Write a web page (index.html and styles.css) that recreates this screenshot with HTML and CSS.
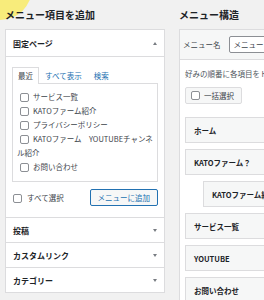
FILE: index.html
```html
<!DOCTYPE html>
<html lang="ja">
<head>
  <meta charset="UTF-8" />
  <title>メニュー</title>
  <link rel="stylesheet" href="styles.css">
</head>
<body>
  <div class="highlight"></div>

  <div class="page">
    <div class="col-left">
      <h2>メニュー項目を追加</h2>

      <div class="accordion">
        <div class="acc-head first">固定ページ <span class="arrow up"></span></div>
        <div class="acc-body">
          <div class="tabs">
            <span class="tab active">最近</span>
            <span class="tab">すべて表示</span>
            <span class="tab">検索</span>
          </div>
          <div class="tab-panel">
            <label class="item"><input type="checkbox">サービス一覧</label>
            <label class="item"><input type="checkbox">KATOファーム紹介</label>
            <label class="item"><input type="checkbox">プライバシーポリシー</label>
            <label class="item"><input type="checkbox">KATOファーム　YOUTUBEチャンネル紹介</label>
            <label class="item"><input type="checkbox">お問い合わせ</label>
          </div>
          <div class="acc-foot">
            <label class="select-all"><input type="checkbox">すべて選択</label>
            <button class="add-btn">メニューに追加</button>
          </div>
        </div>
        <div class="acc-head">投稿 <span class="arrow"></span></div>
        <div class="acc-head">カスタムリンク <span class="arrow"></span></div>
        <div class="acc-head last">カテゴリー <span class="arrow"></span></div>
      </div>
    </div>

    <div class="col-right">
      <h2>メニュー構造</h2>

      <div class="menu-panel">
        <div class="menu-head">
          <label for="menuName">メニュー名</label>
          <input id="menuName" class="menu-name" type="text" value="メニュー">
        </div>
        <div class="menu-body">
          <p class="hint">好みの順番に各項目をドラッグしてください。</p>
          <label class="bulk"><input type="checkbox">一括選択</label>

          <ul class="menu-list">
            <li class="menu-item">ホーム</li>
            <li class="menu-item">KATOファーム？</li>
            <li class="menu-item sub">KATOファーム紹介</li>
            <li class="menu-item">サービス一覧</li>
            <li class="menu-item">YOUTUBE</li>
            <li class="menu-item">お問い合わせ</li>
          </ul>
        </div>
      </div>
    </div>
  </div>
</body>
</html>
```

FILE: styles.css
```css
:root {
  --bg: #f1f1f1;
  --border: #dcdcde;
  --text: #3c434a;
  --title: #1d2327;
  --link: #2271b1;
  --soft: #f6f7f7;
}

html, body {
  overflow: hidden;
}

body {
  margin: 0;
  background: var(--bg);
  font-family: "Noto Sans CJK JP", "Noto Sans", sans-serif;
  font-size: 7.5px;
  color: var(--text);
}

.highlight {
  position: absolute;
  left: -32px;
  top: -44px;
  width: 64px;
  height: 64px;
  border-radius: 50%;
  background: rgba(255, 230, 0, 0.49);
  z-index: -1;
  pointer-events: none;
}

.page {
  display: flex;
  gap: 14px;
  padding: 8px 0 0 5px;
}

.col-left {
  width: 160px;
  flex: none;
}

.col-right {
  width: 200px;
  flex: none;
}

h2 {
  margin: 0 0 8px;
  font-size: 10px;
  line-height: 13px;
  font-weight: 600;
  color: var(--title);
}

input[type="checkbox"] {
  appearance: none;
  width: 9px;
  height: 9px;
  margin: 0 4px 0 3px;
  border: 1px solid #8c8f94;
  border-radius: 2px;
  background: #fff;
  vertical-align: -2px;
}

/* left accordion */
.accordion {
  background: #fff;
  border: 1px solid var(--border);
}

.acc-head {
  display: flex;
  justify-content: space-between;
  align-items: center;
  height: 24px;
  padding: 0 7px;
  font-size: 8px;
  font-weight: 600;
  color: var(--title);
  border-bottom: 1px solid var(--border);
}

.acc-head.first {
  height: 26px;
}

.acc-head.last {
  border-bottom: none;
}

.arrow {
  width: 0;
  height: 0;
  border-left: 2.5px solid transparent;
  border-right: 2.5px solid transparent;
  border-top: 3px solid #787c82;
}

.arrow.up {
  border-top: none;
  border-bottom: 3px solid #787c82;
}

.acc-body {
  padding: 10px 6px 11px;
  border-bottom: 1px solid var(--border);
}

.tabs {
  display: flex;
}

.tab {
  padding: 0 5px;
  line-height: 16px;
  border: 1px solid transparent;
  border-bottom: none;
  color: var(--link);
  margin-bottom: -1px;
}

.tab.active {
  color: var(--text);
  background: #fff;
  border-color: var(--border);
  position: relative;
}

.tab-panel {
  border: 1px solid var(--border);
  padding: 6px 4px 7px;
}

.item {
  display: block;
  line-height: 14px;
}

.acc-foot {
  display: flex;
  justify-content: space-between;
  align-items: center;
  margin-top: 7px;
}

.select-all input {
  margin-left: 1px;
  margin-right: 5px;
}

.add-btn {
  height: 17px;
  padding: 0 7px;
  border: 1px solid var(--link);
  border-radius: 2px;
  background: var(--soft);
  color: var(--link);
  font-family: inherit;
  font-size: 7.5px;
}

/* right menu structure */
.menu-panel {
  background: #fff;
  border: 1px solid var(--border);
}

.menu-head {
  display: flex;
  align-items: center;
  gap: 8px;
  padding: 6px 3px;
  background: var(--soft);
  border-bottom: 1px solid var(--border);
}

.menu-name {
  width: 120px;
  height: 17px;
  box-sizing: border-box;
  padding: 0 4px;
  border: 1px solid #8c8f94;
  border-radius: 2px;
  font-family: inherit;
  font-size: 7.5px;
  color: var(--text);
}

.menu-body {
  padding: 8px 5px;
}

.hint {
  margin: 0;
  line-height: 12px;
  white-space: nowrap;
  color: #50575e;
}

.bulk {
  display: inline-flex;
  align-items: center;
  height: 15px;
  margin-top: 7px;
  padding: 0 7px 0 2px;
  border: 1px solid var(--border);
  border-radius: 2px;
  background: var(--soft);
}

.menu-list {
  list-style: none;
  margin: 0;
  padding: 7px 0 0;
}

.menu-item {
  display: flex;
  align-items: center;
  height: 24px;
  margin-top: 6px;
  padding-left: 8px;
  background: var(--soft);
  border: 1px solid var(--border);
  font-weight: 600;
  color: var(--title);
}

.menu-item.sub {
  margin-left: 18px;
}
```
